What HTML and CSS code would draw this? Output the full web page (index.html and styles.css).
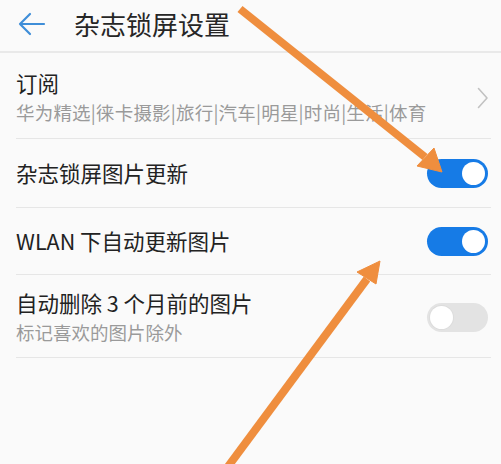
FILE: index.html
```html
<!DOCTYPE html>
<html lang="zh-CN">
<head>
<meta charset="utf-8">
<title>杂志锁屏设置</title>
<link rel="stylesheet" href="styles.css">
</head>
<body>
<div class="page">
  <header class="header">
    <svg class="back" width="30" height="24" viewBox="0 0 30 24">
      <path d="M27 12 H3 M13 2 L3 12 L13 22" fill="none" stroke="#3f8ed8" stroke-width="2.2" stroke-linecap="round" stroke-linejoin="round"/>
    </svg>
    <h1 class="title">杂志锁屏设置</h1>
  </header>
  <ul class="list">
    <li class="row row-sub">
      <div class="text">
        <div class="label">订阅</div>
        <div class="sub sub-wide">华为精选|徕卡摄影|旅行|汽车|明星|时尚|生活|体育</div>
      </div>
      <svg class="chev" width="12" height="22" viewBox="0 0 12 22">
        <path d="M1.5 1.5 L10 11 L1.5 20.5" fill="none" stroke="#c2c2c2" stroke-width="1.6" stroke-linecap="round" stroke-linejoin="round"/>
      </svg>
    </li>
    <li class="row row-a">
      <div class="label">杂志锁屏图片更新</div>
      <span class="toggle on"><span class="knob"></span></span>
    </li>
    <li class="row row-b">
      <div class="label">WLAN 下自动更新图片</div>
      <span class="toggle on"><span class="knob"></span></span>
    </li>
    <li class="row row-sub row-last">
      <div class="text">
        <div class="label">自动删除 3 个月前的图片</div>
        <div class="sub">标记喜欢的图片除外</div>
      </div>
      <span class="toggle off"><span class="knob"></span></span>
    </li>
  </ul>
  <svg class="arrows" width="501" height="464" viewBox="0 0 501 464">
    <g fill="#ef8e3e" stroke="#ef8e3e">
      <line x1="240" y1="9" x2="425" y2="157" stroke-width="8"/>
      <polygon points="442,172 417,166 434,148" stroke-width="1"/>
      <line x1="224" y1="472" x2="367" y2="279" stroke-width="8"/>
      <polygon points="380,261 376,284 357,272" stroke-width="1"/>
    </g>
  </svg>
</div>
</body>
</html>
```
FILE: styles.css
```css
* { box-sizing: border-box; margin: 0; padding: 0; }
html, body { background: #fafafa; }
body {
  font-family: "Noto Sans CJK SC", "Noto Sans", sans-serif;
  color: #222;
  width: 501px;
  height: 464px;
  overflow: hidden;
}
.page { position: relative; width: 501px; height: 464px; }
.header {
  height: 53px;
  display: flex;
  align-items: center;
  padding-left: 17px;
  padding-bottom: 4px;
  border-bottom: 2px solid #e9e9e9;
  gap: 27px;
}
.back { display: block; flex: none; }
.title {
  font-size: 26px;
  font-weight: 400;
  line-height: 30px;
  color: #262626;
}
.list { list-style: none; padding: 0 10px 0 16px; }
.row {
  display: flex;
  align-items: center;
  justify-content: space-between;
  border-bottom: 1px solid #e6e6e6;
}
.row-sub { height: 86px; padding-top: 2px; }
.row-a { height: 69px; }
.row-b { height: 67px; }
.row-last { height: 83px; padding-top: 2px; }
.label { font-size: 21.5px; line-height: 28px; color: #222; }
.sub { font-size: 18.5px; line-height: 26px; margin-top: 2px; color: #9a9a9a; }
.sub-wide { letter-spacing: 0.2px; }
.chev { margin-right: 2px; margin-top: 2px; }
.toggle {
  position: relative;
  width: 61px;
  height: 29px;
  border-radius: 15px;
  display: flex;
  align-items: center;
  padding: 0 3px;
  flex: none;
  margin-right: 3px;
}
.toggle.on { background: #167be6; justify-content: flex-end; }
.toggle.off { background: #e3e3e3; justify-content: flex-start; }
.knob {
  width: 23px;
  height: 23px;
  border-radius: 50%;
  background: #fff;
}
.toggle.off .knob { box-shadow: 0 0 0 1px #dcdcdc; }
.arrows { position: absolute; left: 0; top: 0; pointer-events: none; }
```
